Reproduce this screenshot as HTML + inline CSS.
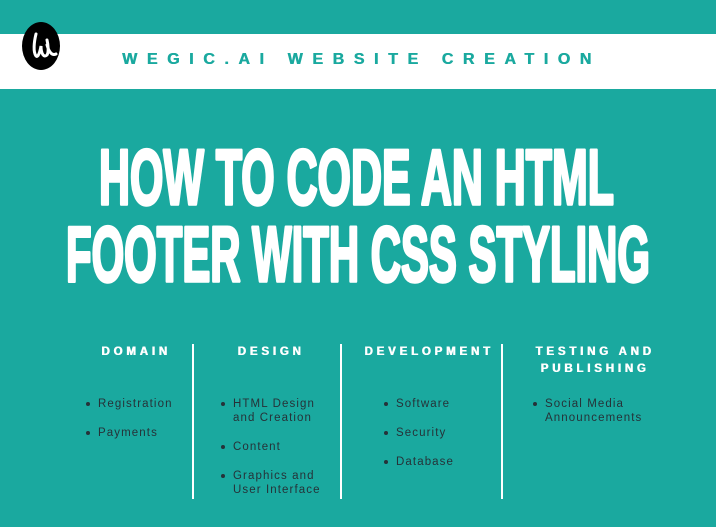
<!DOCTYPE html>
<html><head><meta charset="utf-8"><style>
body{margin:0;width:716px;height:527px;background:#1aa99f;position:relative;overflow:hidden;font-family:"Liberation Sans",sans-serif}
.bar{position:absolute;left:0;top:34px;width:716px;height:55px;background:#fff}
.hd{position:absolute;left:122px;top:51px;font-size:16px;font-weight:bold;color:#1aa99f;letter-spacing:9.6px;white-space:nowrap;text-shadow:0.5px 0 0 #1aa99f}
.v{position:absolute;top:344px;width:2px;height:155px;background:#fff}
.h{position:absolute;color:#fff;font-weight:bold;font-size:11.5px;letter-spacing:3.8px;text-align:center;line-height:17px;text-shadow:0.6px 0 0 #fff}
.it{position:absolute;color:#263238;font-size:11.5px;letter-spacing:1.1px;line-height:14px}
.it div{position:relative;margin-bottom:15px}
.it div:before{content:"";position:absolute;left:-12px;top:5px;width:4px;height:4px;border-radius:50%;background:#263238}
</style></head><body>
<div class="bar"></div>
<svg style="position:absolute;left:0;top:0" width="716" height="527">
<ellipse cx="41" cy="46" rx="19" ry="24" fill="#000"/>
<path d="M36 34 C34 42 33 52 36 56 C38 58 40 52 41 46 C41 54 44 58 47 55 C49 52 48 44 47 40 M47 45 C49 52 52 56 56 54" stroke="#fff" stroke-width="3" fill="none" stroke-linecap="round"/>
<g font-family="Liberation Sans" font-weight="bold" fill="#fff" stroke="#fff" stroke-width="3.5" stroke-linejoin="round" font-size="78">
<text x="99" y="204" textLength="515" lengthAdjust="spacingAndGlyphs">HOW TO CODE AN HTML</text>
<text x="66" y="281" textLength="584" lengthAdjust="spacingAndGlyphs">FOOTER WITH CSS STYLING</text>
</g>
</svg>
<div class="hd">WEGIC.AI WEBSITE CREATION</div>
<div class="v" style="left:192px"></div>
<div class="v" style="left:340px"></div>
<div class="v" style="left:501px"></div>
<div class="h" style="left:86px;width:100px;top:344px">DOMAIN</div>
<div class="h" style="left:226px;width:90px;top:344px">DESIGN</div>
<div class="h" style="left:362px;width:134px;top:344px">DEVELOPMENT</div>
<div class="h" style="left:530px;width:130px;top:344px">TESTING AND<br>PUBLISHING</div>
<div class="it" style="left:98px;top:397px"><div>Registration</div><div>Payments</div></div>
<div class="it" style="left:233px;top:397px"><div>HTML Design<br>and Creation</div><div>Content</div><div>Graphics and<br>User Interface</div></div>
<div class="it" style="left:396px;top:397px"><div>Software</div><div>Security</div><div>Database</div></div>
<div class="it" style="left:545px;top:397px"><div>Social Media<br>Announcements</div></div>
</body></html>
